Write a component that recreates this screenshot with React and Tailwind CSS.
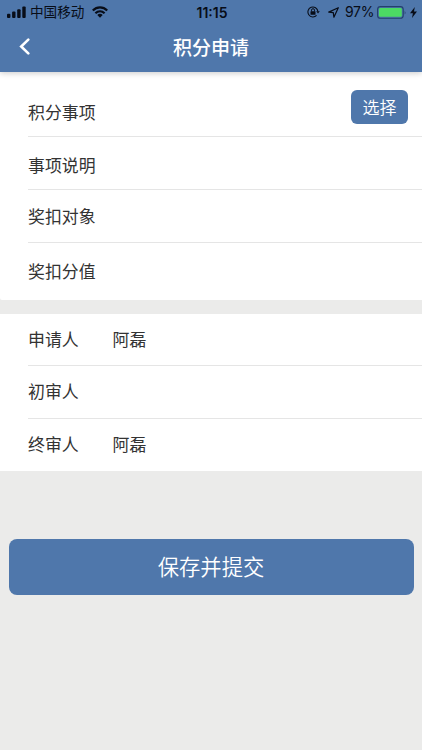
function SignalIcon() {
  return (
    <svg width="19" height="12" viewBox="0 0 19 12" fill="#080d18">
      <rect x="0" y="7.8" width="3.4" height="4.2" rx="1" />
      <rect x="5.1" y="5.6" width="3.4" height="6.4" rx="1" />
      <rect x="10.2" y="3.2" width="3.4" height="8.8" rx="1" />
      <rect x="15.3" y="0.4" width="3.4" height="11.6" rx="1" />
    </svg>
  );
}

function WifiIcon() {
  return (
    <svg width="16" height="12" viewBox="0 0 16 12" fill="none">
      <path
        d="M.8 4.5C5 .3 11 .3 15.2 4.5M3.4 7.2C6.1 4.7 9.9 4.7 12.6 7.2"
        stroke="#080d18"
        strokeWidth="2.2"
      />
      <path d="M5.3 8.9C6.9 7.5 9.1 7.5 10.7 8.9L8 11.7Z" fill="#080d18" />
    </svg>
  );
}

function LockIcon() {
  return (
    <svg width="13" height="12" viewBox="0 0 13 12" fill="none">
      <path
        d="M10.9 5.4A5 5 0 1 0 9.6 9.4"
        stroke="#080d18"
        strokeWidth="1.1"
      />
      <path d="M9.2 5.3h3.6L11 7.6Z" fill="#080d18" />
      <rect x="3.5" y="5.2" width="5" height="3.6" rx="0.5" fill="#080d18" />
      <path d="M4.5 5.4V4.2a1.5 1.5 0 0 1 3 0v1.2" stroke="#080d18" />
    </svg>
  );
}

function LocationIcon() {
  return (
    <svg width="11" height="11" viewBox="0 0 11 11" fill="none">
      <path
        d="M10.3 .7L.7 5.1L5.3 5.7L5.9 10.2Z"
        stroke="#080d18"
        strokeWidth="1.2"
        strokeLinejoin="round"
      />
    </svg>
  );
}

function BatteryIcon() {
  return (
    <svg width="30" height="13" viewBox="0 0 30 13" fill="none">
      <rect
        x="0.6"
        y="0.6"
        width="25.6"
        height="11.6"
        rx="2.8"
        stroke="#23406b"
        strokeWidth="1.1"
      />
      <rect x="2" y="2" width="22.8" height="8.8" rx="1.4" fill="#4cd964" />
      <path d="M27.7 4.4q1.5 2 0 4Z" fill="#23406b" />
    </svg>
  );
}

function BoltIcon() {
  return (
    <svg width="7" height="11" viewBox="0 0 7 11" fill="#080d18">
      <path d="M4.8 0L0 6.2H2.9L2 11L7 4.5H4Z" />
    </svg>
  );
}

function StatusBar() {
  return (
    <div className="grid h-6 grid-cols-[1fr_auto_1fr] items-center pl-[7px] pr-[5px] leading-none text-[#080d18]">
      <div className="flex items-center">
        <SignalIcon />
        <span className="ml-[4px] text-[13.6px]">中国移动</span>
        <span className="ml-[8px]">
          <WifiIcon />
        </span>
      </div>
      <span className="pt-px font-[Inter] text-[14px] font-semibold">
        11:15
      </span>
      <div className="flex items-center justify-end">
        <LockIcon />
        <span className="ml-[8px]">
          <LocationIcon />
        </span>
        <span className="ml-[6px] font-[Inter] text-[14px] tracking-[-0.4px]">
          97%
        </span>
        <span className="ml-[3px]">
          <BatteryIcon />
        </span>
        <span className="ml-[3px]">
          <BoltIcon />
        </span>
      </div>
    </div>
  );
}

function Header() {
  return (
    <header className="relative h-[72px] bg-[#4f77ab] shadow-[0_1px_6px_rgba(0,0,0,0.22)]">
      <StatusBar />
      <div className="grid h-[45px] grid-cols-[1fr_auto_1fr] items-center">
        <button type="button" className="w-fit pl-[19px]">
          <svg width="11" height="17" viewBox="0 0 11 17" fill="none">
            <path
              d="M9.3 1.6L2.2 8.5L9.3 15.4"
              stroke="#fff"
              strokeWidth="2.6"
              strokeLinecap="round"
            />
          </svg>
        </button>
        <h1 className="text-[19px] font-medium leading-none text-white">
          积分申请
        </h1>
      </div>
    </header>
  );
}

function Row({ label, value, className, children }) {
  return (
    <div
      className={`ml-7 flex items-center text-[16.9px] leading-none text-[#333] ${className}`}
    >
      <span className="w-[84.5px]">{label}</span>
      <span>{value}</span>
      {children}
    </div>
  );
}

export default function App() {
  return (
    <div className="h-[750px] w-full overflow-hidden bg-[#ebebea] font-['Noto_Sans_CJK_SC',sans-serif]">
      <Header />

      <section className="h-[228px] rounded-bl-[2px] bg-white">
        <Row
          label="积分事项"
          className="h-[65px] border-b border-[#e5e5e5] pr-[14px] pt-[17px]"
        >
          <button
            type="button"
            className="-mt-[11px] ml-auto h-[34px] w-[57px] rounded-[6px] bg-[#4f77ab] pb-[2px] text-[17px] font-[350] leading-none text-white"
          >
            选择
          </button>
        </Row>
        <Row
          label="事项说明"
          className="h-[53px] border-b border-[#e5e5e5] pt-[5px]"
        />
        <Row label="奖扣对象" className="h-[53px] border-b border-[#e5e5e5]" />
        <Row label="奖扣分值" className="h-[57px]" />
      </section>

      <section className="mt-[14px] h-[157px] bg-white">
        <Row
          label="申请人"
          value="阿磊"
          className="h-[52px] border-b border-[#e5e5e5]"
        />
        <Row
          label="初审人"
          className="h-[53px] border-b border-[#e5e5e5] pb-[2px]"
        />
        <Row label="终审人" value="阿磊" className="h-[52px] pb-[2px]" />
      </section>

      <div className="pl-[8.5px] pr-[8.5px] pt-[68px]">
        <button
          type="button"
          className="h-[56px] w-full rounded-[8px] bg-[#4f77ab] pb-[3px] text-[21.3px] font-[350] leading-none text-white"
        >
          保存并提交
        </button>
      </div>
    </div>
  );
}
